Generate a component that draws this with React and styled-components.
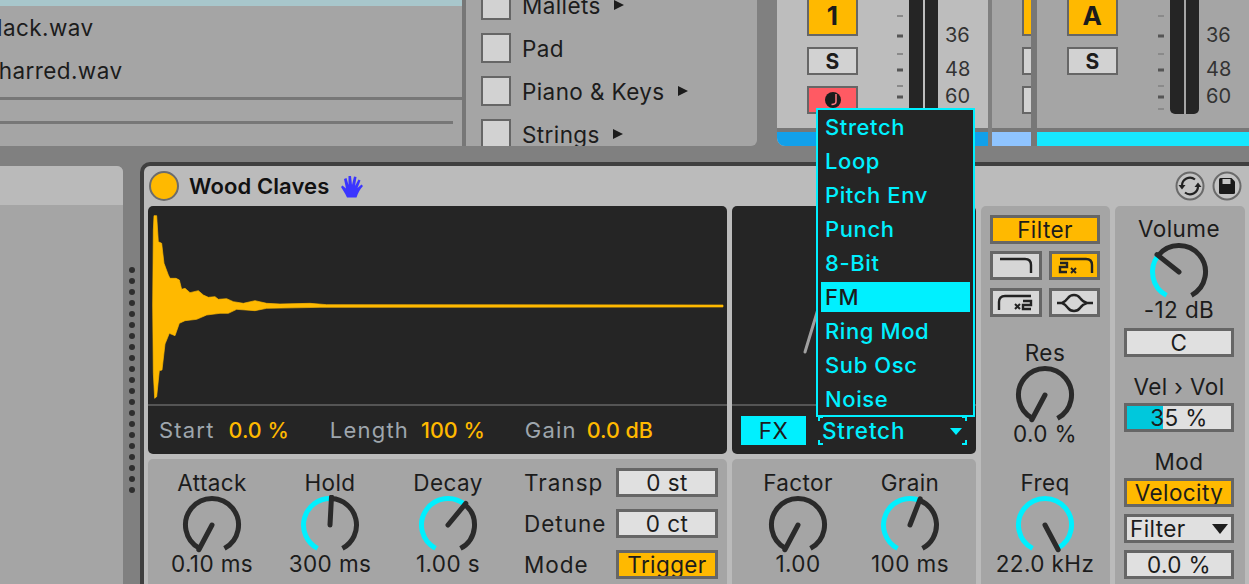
import React from 'react';
import styled, { createGlobalStyle } from 'styled-components';

const GlobalStyle = createGlobalStyle`
	html, body {
		margin: 0;
		padding: 0;
		background: #808080;
	}
	* {
		box-sizing: border-box;
	}
`;

const ORANGE = '#ffb900';
const CYAN = '#00f0ff';
const DARK = '#252525';
const PANEL = '#a5a5a5';
const FONT = 'Inter, "Noto Sans", sans-serif';

const Page = styled.div`
	position: relative;
	width: 1249px;
	height: 584px;
	overflow: hidden;
	background: #808080;
	font-family: ${FONT};
	color: #1c1c1c;
	font-size: 22.5px;
	letter-spacing: 0.4px;
`;
const TopRow = styled.div`
	display: flex;
	height: 146px;
`;
const Browser = styled.div`
	display: flex;
	width: 757px;
	background: ${PANEL};
	border-bottom-right-radius: 6px;
	overflow: hidden;
`;
const Files = styled.div`
	width: 466px;
	border-right: 4px solid #777;
`;
const SelectedRow = styled.div`
	height: 6px;
	background: #a8c7cc;
`;
const FileRow = styled.div`
	height: 43px;
	line-height: 43px;
	margin-left: ${(p) => p.$shift}px;
	white-space: nowrap;
`;
const FilesRule = styled.div`
	height: 3px;
	background: #777;
	margin-top: ${(p) => p.$top}px;
	margin-right: ${(p) => p.$right}px;
`;
const Tags = styled.div`
	display: flex;
	flex-direction: column;
	gap: 13px;
	margin: -10px 0 0 15px;
`;
const TagRow = styled.div`
	display: flex;
	align-items: center;
	gap: 11px;
	height: 30px;
`;
const TagBox = styled.div`
	width: 30px;
	height: 30px;
	background: #d2d2d2;
	border: 2.5px solid #666;
`;
const TagArrow = styled.span`
	width: 0;
	height: 0;
	margin-left: 2px;
	border-left: 10px solid #1c1c1c;
	border-top: 5.5px solid transparent;
	border-bottom: 5.5px solid transparent;
`;

const Mixer = styled.div`
	display: flex;
	margin-left: 20px;
	flex: 1;
`;
const Strip = styled.div`
	display: flex;
	flex-direction: column;
	width: ${(p) => p.$width}px;
	flex: ${(p) => (p.$width ? 'none' : 1)};
	margin-right: ${(p) => p.$gap || 0}px;
	background: ${(p) => p.$bg};
	border-bottom-left-radius: ${(p) => p.$round || 0}px;
	overflow: hidden;
`;
const StripBody = styled.div`
	display: flex;
	height: 128px;
	overflow: hidden;
`;
const StripFoot = styled.div`
	height: 18px;
	background: ${(p) => p.$color};
	border-top: 4px solid #777;
`;
const Buttons = styled.div`
	display: flex;
	flex-direction: column;
	flex: none;
	gap: 11px;
	width: 51px;
	margin: -5px 0 0 30px;
`;
const TrackButton = styled.div`
	display: flex;
	align-items: center;
	justify-content: center;
	flex: none;
	height: ${(p) => p.$height}px;
	background: ${(p) => p.$bg};
	border: 2.5px solid #666;
	font-size: ${(p) => p.$size}px;
	font-weight: 700;
	color: #1c1c1c;
`;
const Ticks = styled.svg`
	flex: none;
	width: 6px;
	height: 128px;
	margin-left: ${(p) => p.$left}px;
`;
const Meter = styled.div`
	display: flex;
	flex: none;
	gap: 2px;
	width: 29px;
	height: 114px;
	margin-left: 6px;
	border-radius: 0 0 5px 5px;
	overflow: hidden;
`;
const MeterBar = styled.div`
	flex: 1;
	background: ${DARK};
`;
const Scale = styled.div`
	display: flex;
	flex-direction: column;
	flex: none;
	margin-left: 7px;
	padding-top: 23px;
	font-size: 20px;
	letter-spacing: 0;
	color: #333;
`;
const ScaleMark = styled.div`
	height: 24px;
	line-height: 24px;
	margin-top: ${(p) => p.$top}px;
`;
const StripDivider = styled.div`
	width: 6px;
	flex: none;
	background: #777;
`;

const BottomRow = styled.div`
	display: flex;
	margin-top: 16px;
	height: 422px;
`;
const SidePanel = styled.div`
	flex: none;
	width: 123px;
	margin-top: 4px;
	background: ${PANEL};
	border-top-right-radius: 6px;
	overflow: hidden;
`;
const SideHead = styled.div`
	height: 39px;
	background: #bababa;
`;
const Grip = styled.div`
	display: flex;
	flex-direction: column;
	align-items: center;
	gap: 5px;
	flex: none;
	width: 17px;
	padding-top: 105px;
`;
const GripDot = styled.div`
	width: 6px;
	height: 6px;
	border-radius: 50%;
	background: #2e2e2e;
`;
const Device = styled.div`
	flex: 1;
	background: #bbb;
	border: 4px solid #3f3f3f;
	border-width: 4px 0 0 4px;
	border-top-left-radius: 10px;
	padding: 0 4px 0 4px;
`;
const DeviceHead = styled.div`
	display: flex;
	align-items: center;
	height: 40px;
	padding-right: 3px;
`;
const PowerDot = styled.div`
	width: 30px;
	height: 30px;
	margin-left: 1px;
	border-radius: 50%;
	background: ${ORANGE};
	border: 2.5px solid #6c6c6c;
`;
const DeviceName = styled.div`
	margin-left: 10px;
	font-size: 22px;
	font-weight: 600;
	letter-spacing: 0.1px;
	color: #111;
`;
const HeadIcon = styled.svg`
	flex: none;
	margin-left: ${(p) => p.$left};
`;
const DeviceBody = styled.div`
	display: grid;
	grid-template-columns: 579px 244px 129px 130px;
	grid-template-rows: 248px 140px;
	gap: 5px;
`;
const Display = styled.div`
	display: flex;
	flex-direction: column;
	background: ${DARK};
	border-radius: 5px;
	overflow: hidden;
`;
const DisplayView = styled.div`
	height: 200px;
	flex: none;
	border-bottom: 2px solid #555;
`;
const DrawSvg = styled.svg`
	display: block;
	width: 100%;
	height: 100%;
`;
const ReadoutRow = styled.div`
	display: flex;
	align-items: center;
	flex: 1;
	padding-left: 11px;
`;
const ReadoutLabel = styled.span`
	color: #9ea6ad;
	font-size: 22px;
	letter-spacing: 1.2px;
	margin-left: ${(p) => p.$left || 0}px;
`;
const ReadoutValue = styled.span`
	color: ${ORANGE};
	font-size: 21.5px;
	letter-spacing: 0;
	margin-left: ${(p) => p.$left}px;
	font-weight: 500;
`;
const FxRow = styled.div`
	display: flex;
	align-items: center;
	flex: 1;
	padding: 0 0 0 9px;
	gap: 12px;
`;
const FxButton = styled.div`
	display: flex;
	align-items: center;
	justify-content: center;
	width: 65px;
	height: 29px;
	background: ${CYAN};
	color: #1c1c1c;
`;
const FxSelect = styled.div`
	position: relative;
	display: flex;
	align-items: center;
	justify-content: space-between;
	width: 149px;
	height: 29px;
	padding: 0 5px 0 4px;
	color: ${CYAN};
	font-weight: 500;
	letter-spacing: 0.8px;
`;
const Corner = styled.i`
	position: absolute;
	width: 5px;
	height: 5px;
	${(p) => (p.$top ? 'top: 0' : 'bottom: 0')};
	${(p) => (p.$left ? 'left: 0' : 'right: 0')};
	${(p) => (p.$top ? 'border-top' : 'border-bottom')}: 2px solid ${CYAN};
	${(p) => (p.$left ? 'border-left' : 'border-right')}: 2px solid ${CYAN};
`;
const FxArrow = styled.span`
	width: 0;
	height: 0;
	margin-top: 2px;
	border-top: 7px solid ${CYAN};
	border-left: 6px solid transparent;
	border-right: 6px solid transparent;
`;
const Section = styled.div`
	grid-column: ${(p) => p.$column};
	grid-row: 2;
	background: ${PANEL};
	border-radius: 5px 5px 0 0;
	display: flex;
	padding: ${(p) => p.$pad};
`;
const TallSection = styled.div`
	grid-row: span 2;
	display: flex;
	flex-direction: column;
	align-items: center;
	background: ${PANEL};
	border-radius: 5px 5px 0 0;
	padding: ${(p) => p.$pad};
`;
const KnobCell = styled.div`
	display: flex;
	flex-direction: column;
	align-items: center;
	flex: none;
	width: ${(p) => p.$width || 118}px;
	margin-top: ${(p) => p.$top || 0}px;
`;
const ParamLabel = styled.div`
	height: 24px;
	line-height: 24px;
	white-space: nowrap;
	margin-top: ${(p) => p.$top || 0}px;
`;
const ParamValue = styled.div`
	height: 24px;
	line-height: 24px;
	white-space: nowrap;
	margin-top: ${(p) => p.$top ?? -3}px;
`;
const KnobSvg = styled.svg`
	display: block;
	flex: none;
	margin-top: ${(p) => p.$top || 0}px;
`;
const ParamRows = styled.div`
	display: flex;
	flex-direction: column;
	gap: 12px;
	margin: -3px 0 0 17px;
`;
const ParamRow = styled.div`
	display: flex;
	align-items: center;
	height: 29px;
`;
const RowLabel = styled.div`
	width: 92px;
	letter-spacing: 1px;
`;
const Field = styled.div`
	position: relative;
	display: flex;
	align-items: center;
	justify-content: ${(p) => p.$justify || 'center'};
	flex: none;
	width: ${(p) => p.$width || 110}px;
	height: 29px;
	margin-top: ${(p) => p.$top || 0}px;
	padding: 0 ${(p) => p.$pad || 0}px;
	background: ${(p) => p.$bg || '#e0e0e0'};
	border: 3px solid #666;
	overflow: hidden;
`;
const FieldFill = styled.div`
	position: absolute;
	left: 0;
	top: 0;
	bottom: 0;
	background: #00c8dc;
`;
const FieldText = styled.span`
	position: relative;
`;
const SelectArrow = styled.span`
	width: 0;
	height: 0;
	border-top: 10px solid #1c1c1c;
	border-left: 8px solid transparent;
	border-right: 8px solid transparent;
`;
const FilterTypes = styled.div`
	display: grid;
	grid-template-columns: 52px 51px;
	grid-auto-rows: 29px;
	gap: 8px 7px;
	margin-top: 7px;
	margin-bottom: 24px;
`;
const FilterType = styled.div`
	background: ${(p) => (p.$active ? ORANGE : '#d6d6d6')};
	border: 3px solid #666;
`;
const Menu = styled.div`
	position: absolute;
	left: 816px;
	top: 108px;
	width: 159px;
	height: 309px;
	padding: 0 3px;
	background: ${DARK};
	border: 2px solid ${CYAN};
`;
const MenuItem = styled.div`
	height: 34px;
	padding: 2px 0 2px 4px;
	font-weight: 500;
	font-size: 22px;
	letter-spacing: 0.6px;
	line-height: 30px;
	white-space: nowrap;
	color: ${(p) => (p.$active ? '#1c1c1c' : CYAN)};
	background: ${(p) => (p.$active ? `linear-gradient(${CYAN}, ${CYAN}) 0 2px / 100% 30px no-repeat` : 'none')};
`;

// envelope traced over a 3x crop, so the viewBox below is in those units
const WAVE_TOP = [
	[38, 315], [40, 90], [42, 47], [50, 47], [55, 125], [65, 130], [72, 190], [85, 225], [90, 235], [108, 235],
	[118, 240], [125, 268], [135, 265], [150, 278], [175, 272], [190, 285], [205, 292], [225, 290], [235, 298],
	[260, 296], [280, 305], [310, 310], [345, 302], [380, 310], [420, 312], [510, 310], [560, 314], [1749, 315],
];
const WAVE_BOTTOM = [
	[1749, 321], [540, 322], [380, 325], [345, 332], [290, 328], [265, 340], [240, 340], [200, 345], [170, 358],
	[135, 362], [118, 370], [105, 407], [88, 400], [75, 432], [66, 510], [58, 512], [50, 590], [44, 595], [40, 520],
];
const wavePath = 'M' + [...WAVE_TOP, ...WAVE_BOTTOM].map((p) => p.join(' ')).join('L') + 'Z';

const polar = (cx, cy, r, deg) => {
	const a = (deg * Math.PI) / 180;
	return [cx + r * Math.sin(a), cy - r * Math.cos(a)];
};

const arc = (from, to) => {
	const [x1, y1] = polar(32, 30, 26.5, from);
	const [x2, y2] = polar(32, 30, 26.5, to);
	const large = to - from > 180 ? 1 : 0;
	return `M${x1} ${y1}A26.5 26.5 0 ${large} 1 ${x2} ${y2}`;
};

const Knob = ({ value, top }) => {
	const angle = -152 + 304 * value;
	const [nx, ny] = polar(32, 30, 28, angle);
	return (
		<KnobSvg width="64" height="60" viewBox="0 0 64 60" $top={top}>
			{value > 0 && <path d={arc(-152, angle)} fill="none" stroke={CYAN} strokeWidth="5" />}
			{value < 1 && <path d={arc(angle, 152)} fill="none" stroke="#2a2a2a" strokeWidth="5" />}
			<path d={`M32 30L${nx} ${ny}`} stroke="#2a2a2a" strokeWidth="5" strokeLinecap="round" />
		</KnobSvg>
	);
};

const KnobParam = ({ label, value, amount, width, top }) => (
	<KnobCell $width={width} $top={top}>
		<ParamLabel>{label}</ParamLabel>
		<Knob value={amount} />
		<ParamValue>{value}</ParamValue>
	</KnobCell>
);

const tickMarks = [[16, 2], [36, 3], [54, 2], [70, 3], [86, 2], [97, 3], [109, 2]];

const TrackMeter = ({ left }) => (
	<>
		<Ticks viewBox="0 0 6 128" $left={left}>
			{tickMarks.map(([y, h]) => (
				<rect key={y} x="0" y={y - h / 2} width="6" height={h} fill={h === 3 ? '#555' : '#8a8a8a'} />
			))}
		</Ticks>
		<Meter>
			<MeterBar />
			<MeterBar />
		</Meter>
		<Scale>
			<ScaleMark $top={0}>36</ScaleMark>
			<ScaleMark $top={10}>48</ScaleMark>
			<ScaleMark $top={3}>60</ScaleMark>
		</Scale>
	</>
);

const menuItems = ['Stretch', 'Loop', 'Pitch Env', 'Punch', '8-Bit', 'FM', 'Ring Mod', 'Sub Osc', 'Noise'];

function App() {
	return (
		<Page>
			<GlobalStyle />
			<TopRow>
				<Browser>
					<Files>
						<SelectedRow />
						<FileRow $shift={-18}>Black.wav</FileRow>
						<FileRow $shift={-18}>Charred.wav</FileRow>
						<FilesRule $top={5} $right={0} />
						<FilesRule $top={21} $right={9} />
					</Files>
					<Tags>
						<TagRow><TagBox />Mallets<TagArrow /></TagRow>
						<TagRow><TagBox />Pad</TagRow>
						<TagRow><TagBox />Piano &amp; Keys<TagArrow /></TagRow>
						<TagRow><TagBox />Strings<TagArrow /></TagRow>
					</Tags>
				</Browser>
				<Mixer>
					<Strip $width={211} $gap={4} $bg="#bdbdbd" $round={8}>
						<StripBody>
							<Buttons>
								<TrackButton $height={41} $bg={ORANGE} $size={26}>1</TrackButton>
								<TrackButton $height={28} $bg="#d2d2d2" $size={21}>S</TrackButton>
								<TrackButton $height={28} $bg="#ff5a63">
									<svg width="16" height="16" viewBox="0 0 16 16">
										<circle cx="8" cy="8" r="8" fill="#1c1c1c" />
										<path d="M11 2V9.500C11 11.500 9 12.500 6.500 12.500" fill="none" stroke="#ff7a80" strokeWidth="1.500" />
									</svg>
								</TrackButton>
							</Buttons>
							<TrackMeter left={39} />
						</StripBody>
						<StripFoot $color="#12a0ea" />
					</Strip>
					<Strip $width={39} $bg={PANEL}>
						<StripBody>
							<Buttons>
								<TrackButton $height={41} $bg={ORANGE} $size={26} />
								<TrackButton $height={28} $bg="#d2d2d2" $size={21} />
								<TrackButton $height={28} $bg="#d2d2d2" />
							</Buttons>
						</StripBody>
						<StripFoot $color="#8fc4ff" />
					</Strip>
					<StripDivider />
					<Strip $bg={PANEL}>
						<StripBody>
							<Buttons>
								<TrackButton $height={41} $bg={ORANGE} $size={26}>A</TrackButton>
								<TrackButton $height={28} $bg="#d2d2d2" $size={21}>S</TrackButton>
							</Buttons>
							<TrackMeter left={40} />
						</StripBody>
						<StripFoot $color="#17e8ff" />
					</Strip>
				</Mixer>
			</TopRow>
			<BottomRow>
				<SidePanel>
					<SideHead />
				</SidePanel>
				<Grip>
					{Array.from({ length: 21 }, (_, i) => (
						<GripDot key={i} />
					))}
				</Grip>
				<Device>
					<DeviceHead>
						<PowerDot />
						<DeviceName>Wood Claves</DeviceName>
						<HeadIcon $left="11px" width="24" height="25" viewBox="0 0 24 25">
							<path
								d="M7 23.500C5 19 2.500 15.500 1 13L2.500 11.500L6 14.500L4 5L6.500 4L8.500 11L8.500 2L11 2L12 11L14 2.500L16.500 3L15 12L18.500 5.500L20.500 6.500L17.500 14L21.500 10.500L23 12C20 15 18 19 16.500 23.500Z"
								fill="#3b35ff"
							/>
						</HeadIcon>
						<HeadIcon $left="auto" width="30" height="30" viewBox="0 0 30 30">
							<circle cx="15" cy="15" r="13.500" fill="#c4c4c4" stroke="#6a6a6a" strokeWidth="2" />
							<path d="M7 15A8 8 0 0 1 20 8.500" fill="none" stroke="#222" strokeWidth="2.200" />
							<path d="M23 15A8 8 0 0 1 10 21.500" fill="none" stroke="#222" strokeWidth="2.200" />
							<path d="M3.500 14H10.500L7 18.500ZM26.500 16H19.500L23 11.500Z" fill="#222" />
						</HeadIcon>
						<HeadIcon $left="7px" width="30" height="30" viewBox="0 0 30 30">
							<circle cx="15" cy="15" r="13.500" fill="#c4c4c4" stroke="#6a6a6a" strokeWidth="2" />
							<path
								d="M7 8.500A1.500 1.500 0 0 1 8.500 7H19.500L23 10.500V21.500A1.500 1.500 0 0 1 21.500 23H8.500A1.500 1.500 0 0 1 7 21.500Z"
								fill="#1a1a1a"
							/>
							<rect x="10.500" y="8" width="8" height="5" fill="#c4c4c4" />
						</HeadIcon>
					</DeviceHead>
					<DeviceBody>
						<Display>
							<DisplayView>
								<DrawSvg viewBox="24 18 1737 594" preserveAspectRatio="none">
									<path d={wavePath} fill={ORANGE} stroke={ORANGE} strokeWidth="2" />
								</DrawSvg>
							</DisplayView>
							<ReadoutRow>
								<ReadoutLabel>Start</ReadoutLabel>
								<ReadoutValue $left={14}>0.0 %</ReadoutValue>
								<ReadoutLabel $left={41}>Length</ReadoutLabel>
								<ReadoutValue $left={12}>100 %</ReadoutValue>
								<ReadoutLabel $left={40}>Gain</ReadoutLabel>
								<ReadoutValue $left={10}>0.0 dB</ReadoutValue>
							</ReadoutRow>
						</Display>
						<Display>
							<DisplayView>
								<DrawSvg viewBox="0 0 244 198">
									<path d="M73 146L90 90" stroke="#a0a0a0" strokeWidth="3" strokeLinecap="round" />
								</DrawSvg>
							</DisplayView>
							<FxRow>
								<FxButton>FX</FxButton>
								<FxSelect>
									<Corner $top $left />
									<Corner $top />
									<Corner $left />
									<Corner />
									Stretch
									<FxArrow />
								</FxSelect>
							</FxRow>
						</Display>
						<TallSection $pad="9px 10px 0 9px">
							<Field $bg={ORANGE}>Filter</Field>
							<FilterTypes>
								<FilterType>
									<DrawSvg viewBox="0 0 46 23">
										<path d="M7 5H32Q38 5 38 11V19" fill="none" stroke="#222" strokeWidth="2.400" />
									</DrawSvg>
								</FilterType>
								<FilterType $active>
									<DrawSvg viewBox="0 0 45 23">
										<path d="M8 5H34Q40 5 40 11V19M8 9H15V13H8V18H15" fill="none" stroke="#222" strokeWidth="2.400" />
										<path d="M19 14L24 19M24 14L19 19" fill="none" stroke="#222" strokeWidth="2" />
									</DrawSvg>
								</FilterType>
								<FilterType>
									<DrawSvg viewBox="0 0 46 23">
										<path d="M6 19V11Q6 5 12 5H38" fill="none" stroke="#222" strokeWidth="2.400" />
										<path d="M22 13L27 18M27 13L22 18" fill="none" stroke="#222" strokeWidth="2" />
										<path d="M30 10H38V14H30V18H38" fill="none" stroke="#222" strokeWidth="2.400" />
									</DrawSvg>
								</FilterType>
								<FilterType>
									<DrawSvg viewBox="0 0 45 23">
										<path d="M5 12H10Q13 11 16 7Q18 4 22 4Q26 4 28 7Q31 11 35 12H41M10 12Q13 13 16 17Q18 20 22 20Q26 20 28 17Q31 13 35 12" fill="none" stroke="#222" strokeWidth="2.400" />
									</DrawSvg>
								</FilterType>
							</FilterTypes>
							<KnobParam label="Res" value="0.0 %" amount={0} width={110} />
							<KnobParam label="Freq" value="22.0 kHz" amount={1} width={110} top={25} />
						</TallSection>
						<TallSection $pad="11px 11px 0 9px">
							<ParamLabel>Volume</ParamLabel>
							<Knob value={0.33} top={1} />
							<ParamValue $top={-4}>-12 dB</ParamValue>
							<Field $top={6}>C</Field>
							<ParamLabel $top={18}>Vel › Vol</ParamLabel>
							<Field $top={4}>
								<FieldFill style={{ width: '35%' }} />
								<FieldText>35 %</FieldText>
							</Field>
							<ParamLabel $top={18}>Mod</ParamLabel>
							<Field $top={4} $bg={ORANGE}>Velocity</Field>
							<Field $top={7} $justify="space-between" $pad={3}>
								Filter
								<SelectArrow />
							</Field>
							<Field $top={7}>0.0 %</Field>
						</TallSection>
						<Section $column={1} $pad="12px 0 0 5px">
							<KnobParam label="Attack" value="0.10 ms" amount={0} />
							<KnobParam label="Hold" value="300 ms" amount={0.51} />
							<KnobParam label="Decay" value="1.00 s" amount={0.63} />
							<ParamRows>
								<ParamRow>
									<RowLabel>Transp</RowLabel>
									<Field $width={102}>0 st</Field>
								</ParamRow>
								<ParamRow>
									<RowLabel>Detune</RowLabel>
									<Field $width={102}>0 ct</Field>
								</ParamRow>
								<ParamRow>
									<RowLabel>Mode</RowLabel>
									<Field $width={102} $bg={ORANGE}>Trigger</Field>
								</ParamRow>
							</ParamRows>
						</Section>
						<Section $column={2} $pad="12px 0 0 10px">
							<KnobParam label="Factor" value="1.00" amount={0} width={112} />
							<KnobParam label="Grain" value="100 ms" amount={0.57} width={112} />
						</Section>
					</DeviceBody>
				</Device>
			</BottomRow>
			<Menu>
				{menuItems.map((item) => (
					<MenuItem key={item} $active={item === 'FM'}>
						{item}
					</MenuItem>
				))}
			</Menu>
		</Page>
	);
}

export default App;
